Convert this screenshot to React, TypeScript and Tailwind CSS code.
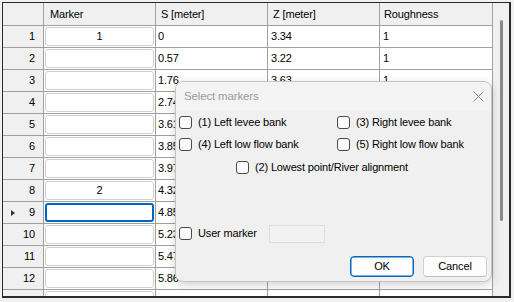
import React from "react";

const rows = [
  { m: "1", s: "0", z: "3.34", r: "1" },
  { m: "", s: "0.57", z: "3.22", r: "1" },
  { m: "", s: "1.76", z: "3.63", r: "1" },
  { m: "", s: "2.74", z: "", r: "" },
  { m: "", s: "3.61", z: "", r: "" },
  { m: "", s: "3.85", z: "", r: "" },
  { m: "", s: "3.97", z: "", r: "" },
  { m: "2", s: "4.32", z: "", r: "" },
  { m: "", s: "4.85", z: "", r: "" },
  { m: "", s: "5.23", z: "", r: "" },
  { m: "", s: "5.47", z: "", r: "" },
  { m: "", s: "5.86", z: "3.07", r: "1" },
  { m: "", s: "6.24", z: "1.79", r: "1" },
];

function Check() {
  return (
    <span className="w-[13px] h-[13px] shrink-0 border border-[#4a4a4a] rounded-[3px] bg-[#fbfbfb]" />
  );
}

function CheckItem({ label }: { label: string }) {
  return (
    <div className="flex items-center gap-[6px]">
      <Check />
      <span>{label}</span>
    </div>
  );
}

export default function App() {
  return (
    <div className="relative w-[514px] h-[302px] bg-[#f0f0f0] overflow-hidden font-['Liberation_Sans',Arial,sans-serif] text-[11px] tracking-[-0.15px] text-black">
      <div className="ml-[2px] pt-[2px]">
        <div className="w-[509px] h-[296px] border-t border-l border-r-2 border-b-2 border-[#2a2a2a] flex overflow-hidden bg-white">
          {/* grid */}
          <div className="w-[490px] flex flex-col">
            <div className="flex h-[23px] shrink-0 bg-[#f0f0f0] border-b border-[#a0a0a0]">
              <div className="w-[41px] border-r border-[#a0a0a0]" />
              <div className="w-[112px] border-r border-[#a0a0a0] pl-[6px] flex items-center">Marker</div>
              <div className="w-[112px] border-r border-[#a0a0a0] pl-[5px] flex items-center">S [meter]</div>
              <div className="w-[112px] border-r border-[#a0a0a0] pl-[5px] flex items-center">Z [meter]</div>
              <div className="w-[113px] border-r border-[#a0a0a0] pl-[4px] flex items-center">Roughness</div>
            </div>
            {rows.map((row, i) => (
              <div key={i} className="flex h-[22px] shrink-0 border-b border-[#a0a0a0]">
                <div className="relative w-[41px] bg-[#f0f0f0] border-r border-[#a0a0a0] flex items-center justify-end pr-[8px]">
                  {i === 8 && (
                    <span className="absolute left-[8px] top-[8px] w-0 h-0 border-y-[3px] border-y-transparent border-l-[4px] border-l-[#333]" />
                  )}
                  {i + 1}
                </div>
                <div className="w-[112px] border-r border-[#a0a0a0] p-[1px]">
                  <div
                    className={
                      i === 8
                        ? "h-full rounded-[3px] border-2 border-[#0067c0] bg-white flex items-center justify-center"
                        : "h-full rounded-[3px] border border-[#cfcfcf] bg-white flex items-center justify-center"
                    }
                  >
                    {row.m}
                  </div>
                </div>
                <div className="w-[112px] border-r border-[#a0a0a0] pl-[2px] flex items-center">{row.s}</div>
                <div className="w-[112px] border-r border-[#a0a0a0] pl-[3px] flex items-center">{row.z}</div>
                <div className="w-[113px] border-r border-[#a0a0a0] pl-[3px] flex items-center">{row.r}</div>
              </div>
            ))}
          </div>
          {/* scrollbar */}
          <div className="w-[16px] bg-[#f0f0f0] pt-[17px] pl-[7px]">
            <div className="w-[3px] h-[201px] rounded-full bg-[#8a8a8a]" />
          </div>
        </div>
      </div>

      {/* dialog */}
      <div className="absolute left-[175px] top-[81px] w-[317px] h-[201px] bg-[#f0f0f0] border border-[#c4c4c4] rounded-[8px] shadow-[0_3px_10px_rgba(0,0,0,0.18)] flex flex-col">
        <div className="h-[29px] shrink-0 bg-[#f3f3f3] rounded-t-[8px] flex items-center justify-between pl-[8px] pr-[7px]">
          <span className="text-[11.5px] text-[#9b9b9b]">Select markers</span>
          <svg width="11" height="11" viewBox="0 0 11 11">
            <path d="M0.5 0.5 L10.5 10.5 M10.5 0.5 L0.5 10.5" stroke="#8a8a8a" strokeWidth="1" />
          </svg>
        </div>
        <div className="flex flex-col px-[3px]">
          <div className="flex h-[22px] items-center">
            <div className="w-[158px]">
              <CheckItem label="(1) Left levee bank" />
            </div>
            <CheckItem label="(3) Right levee bank" />
          </div>
          <div className="flex h-[22px] items-center">
            <div className="w-[158px]">
              <CheckItem label="(4) Left low flow bank" />
            </div>
            <CheckItem label="(5) Right low flow bank" />
          </div>
          <div className="flex h-[22px] mt-[1px] items-center pl-[57px]">
            <CheckItem label="(2) Lowest point/River alignment" />
          </div>
          <div className="flex h-[22px] mt-[44px] items-center">
            <div className="w-[90px]">
              <CheckItem label="User marker" />
            </div>
            <div className="w-[56px] h-[18px] mt-[1px] border border-[#dedede] bg-[#f2f2f2]" />
          </div>
          <div className="flex justify-end gap-[9px] mt-[12px] pr-[1px]">
            <button className="w-[64px] h-[21px] rounded-[4px] border border-[#0067c0] shadow-[inset_0_0_0_0.5px_#0067c0] bg-[#fdfdfd] flex items-center justify-center">
              OK
            </button>
            <button className="w-[64px] h-[21px] rounded-[4px] border border-[#d0d0d0] border-b-[#bdbdbd] bg-[#fdfdfd] flex items-center justify-center">
              Cancel
            </button>
          </div>
        </div>
      </div>
    </div>
  );
}
